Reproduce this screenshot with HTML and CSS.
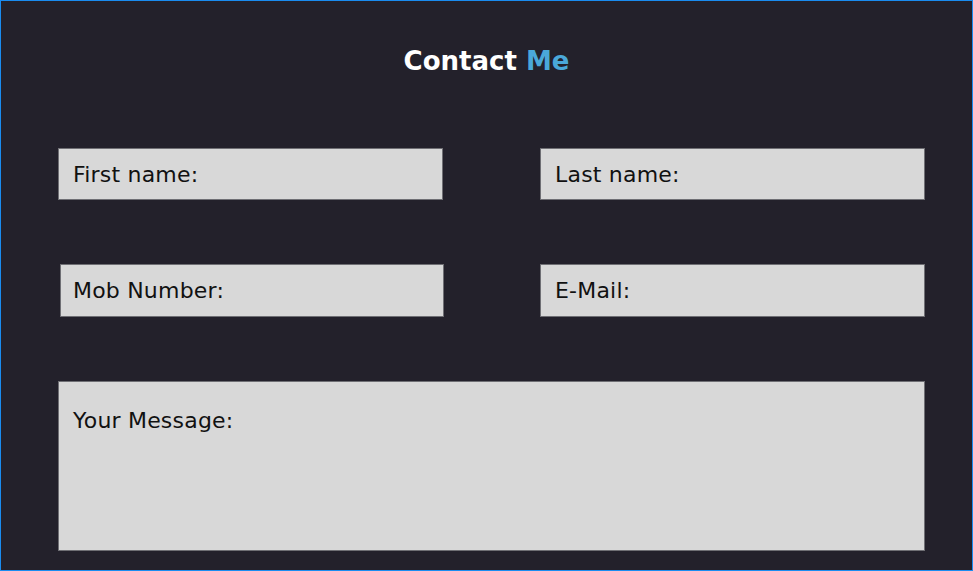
FILE: index.html
```html
<!DOCTYPE html>
<html lang="en">
<head>
<meta charset="utf-8">
<title>Contact Me</title>
<link rel="stylesheet" href="styles.css">
</head>
<body>
<section class="contact">
  <h1 class="title">Contact <span class="accent">Me</span></h1>
  <form class="form">
    <div class="field field-top">First name:</div>
    <div class="field field-top">Last name:</div>
    <div class="field field-mob">Mob Number:</div>
    <div class="field">E-Mail:</div>
    <div class="field field-message">Your Message:</div>
  </form>
</section>
</body>
</html>
```
FILE: styles.css
```css
html, body {
  margin: 0;
  padding: 0;
  background: #23212b;
}
.contact {
  box-sizing: border-box;
  width: 973px;
  height: 571px;
  border: 1px solid #1a8cf0;
  background: #23212b;
  font-family: "DejaVu Sans", Lato, sans-serif;
  overflow: hidden;
}
.title {
  margin: 0;
  padding-top: 43px;
  text-align: center;
  font-size: 26px;
  font-weight: 700;
  line-height: 34px;
  color: #ffffff;
}
.accent {
  color: #4aa8da;
}
.form {
  display: grid;
  grid-template-columns: 385px 385px;
  column-gap: 97px;
  row-gap: 64px;
  padding: 70px 0 0 57px;
}
.field {
  box-sizing: border-box;
  height: 53px;
  background: #d8d8d8;
  border: 1px solid #6f6f74;
  color: #111;
  font-size: 22px;
  letter-spacing: 0.2px;
  padding: 13px 0 0 14px;
  line-height: 26px;
}
.field-top {
  height: 52px;
}
.field-mob {
  margin-left: 2px;
  width: 384px;
  padding-left: 12px;
}
.field-message {
  grid-column: 1 / 3;
  height: 170px;
  padding-top: 26px;
}
```
